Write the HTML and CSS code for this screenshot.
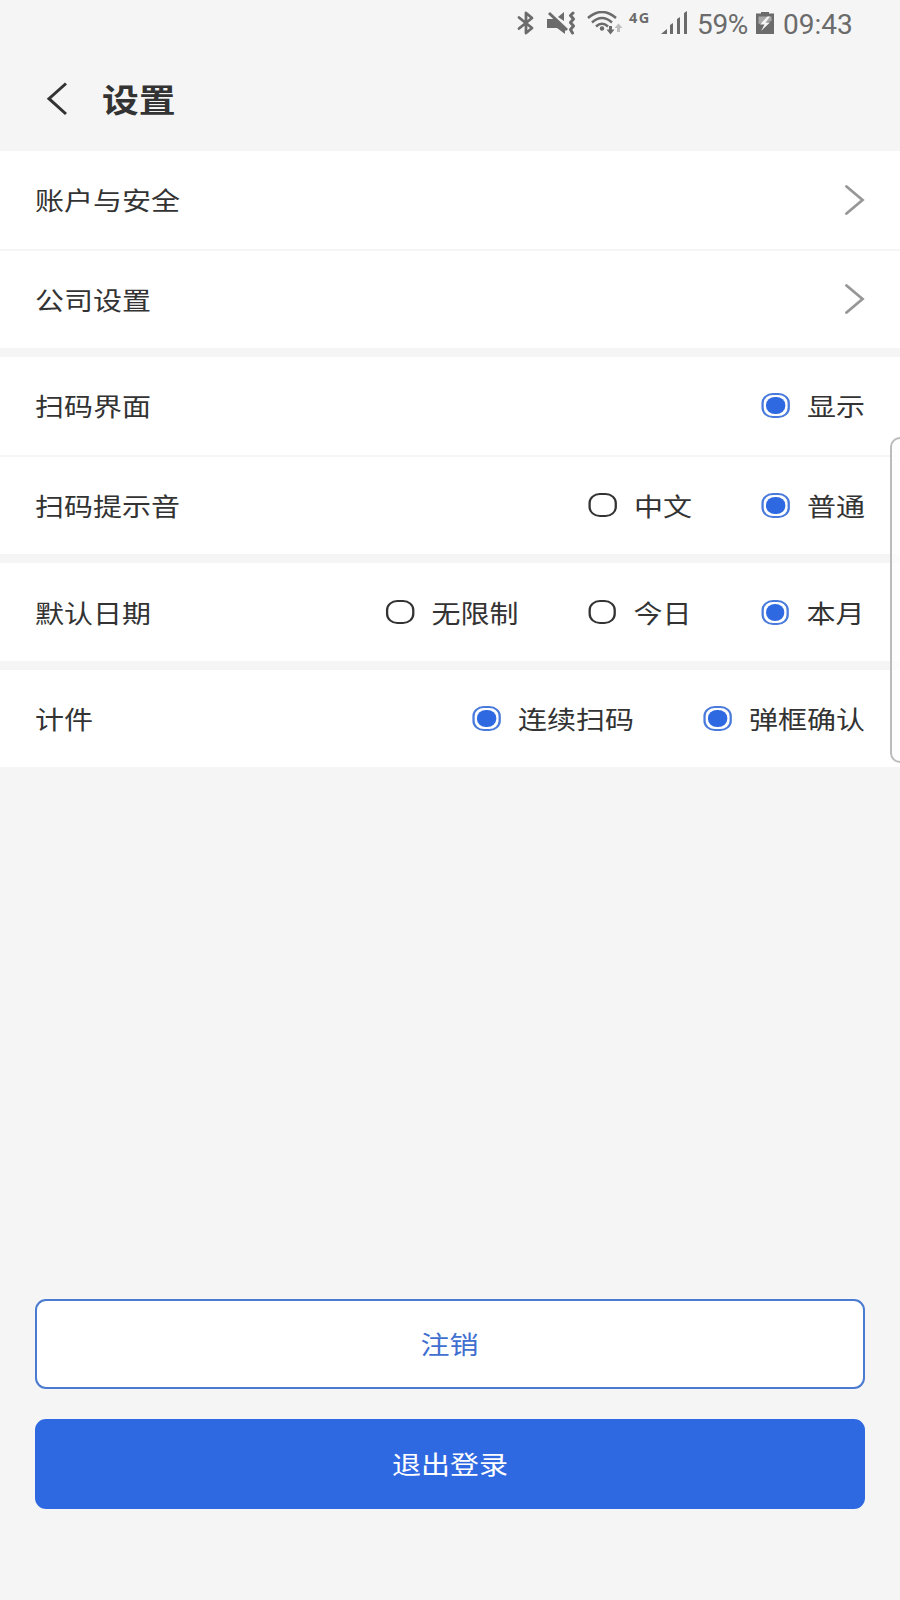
FILE: index.html
```html
<!DOCTYPE html>
<html lang="zh-CN">
<head>
    <meta charset="UTF-8">
    <meta name="viewport" content="width=device-width, initial-scale=1.0">
    <title>设置</title>
    <link rel="stylesheet" href="styles.css">
</head>
<body>
    <div class="status">
        <svg class="bluetooth" width="18" height="24" viewBox="0 0 18 24">
            <path d="M2 6.500 15 17 9 22V2L15 7 2 17.500" fill="none" stroke="#6b6b6b" stroke-width="2.800" stroke-linejoin="round" stroke-linecap="round"/>
        </svg>
        <svg class="mute" width="30" height="24" viewBox="0 0 30 24">
            <path d="M0 8h7l11 9v6l-8-6H0zM11 6l6-5v9z" fill="#6b6b6b"/>
            <path d="M2 2 20 19" stroke="#6b6b6b" stroke-width="3"/>
            <path d="M26 2 23.500 4.500 26.500 8 23.500 11.500 26.500 15 23.500 18.500 25.500 22" fill="none" stroke="#6b6b6b" stroke-width="3" stroke-linejoin="round" stroke-linecap="round"/>
        </svg>
        <svg class="wifi" width="36" height="24" viewBox="0 0 36 24">
            <g fill="none" stroke="#6b6b6b" stroke-width="2.500">
                <path d="M1 7Q15-5 29 7"/>
                <path d="M5 11.500Q15 2.500 25 11.500"/>
                <path d="M9 15.500Q15 10 21 15.500"/>
            </g>
            <circle cx="15" cy="17.500" r="2.200" fill="#6b6b6b"/>
            <path d="M22 15h3v3.500h2.500l-4 5-4-5H22z" fill="#6b6b6b"/>
            <path d="M30 21v-4h-2.500l4-4.500 4 4.500H33v4z" fill="#bdbdbd"/>
        </svg>
        <span class="net">4G</span>
        <svg class="signal" width="28" height="24" viewBox="0 0 28 24">
            <path d="M0 23 6 18v5zM9 14l3-2v11H9zM16 8l3-2v17h-3zM23 2l3-2v23h-3z" fill="#6b6b6b"/>
        </svg>
        <span class="percent">59%</span>
        <svg class="battery" width="18" height="24" viewBox="0 0 18 24">
            <path d="M0 2.500h5V1h8v1.500h5V23H0z" fill="#6b6b6b"/>
            <path d="M2.500 5.500h13v4.500L2.500 13z" fill="#a9a9a9"/>
            <path d="M11.500 5.500 4 13.500h4.500L5 20l9-8.500H9.500l4.500-6z" fill="#f5f5f5"/>
        </svg>
        <span class="time">09:43</span>
    </div>

    <div class="header">
        <svg class="back" width="22" height="34" viewBox="0 0 22 34">
            <path d="M20 1.500 3 16.700 20 32" fill="none" stroke="#333" stroke-width="3"/>
        </svg>
        <h1 class="title">设置</h1>
    </div>

    <div class="list">
        <div class="group">
            <div class="row line">
                <span class="name">账户与安全</span>
                <svg class="arrow" width="21" height="30" viewBox="0 0 21 30">
                    <path d="M2.500 1.500 18.500 15 2.500 28.500" fill="none" stroke="#979797" stroke-width="2.800" stroke-linecap="round"/>
                </svg>
            </div>
            <div class="row">
                <span class="name">公司设置</span>
                <svg class="arrow" width="21" height="30" viewBox="0 0 21 30">
                    <path d="M2.500 1.500 18.500 15 2.500 28.500" fill="none" stroke="#979797" stroke-width="2.800" stroke-linecap="round"/>
                </svg>
            </div>
        </div>
        <div class="group">
            <div class="row line">
                <span class="name">扫码界面</span>
                <div class="options">
                    <div class="option"><i class="radio on"></i><span class="text">显示</span></div>
                </div>
            </div>
            <div class="row">
                <span class="name">扫码提示音</span>
                <div class="options">
                    <div class="option"><i class="radio"></i><span class="text">中文</span></div>
                    <div class="option"><i class="radio on"></i><span class="text">普通</span></div>
                </div>
            </div>
        </div>
        <div class="group">
            <div class="row">
                <span class="name">默认日期</span>
                <div class="options">
                    <div class="option"><i class="radio"></i><span class="text">无限制</span></div>
                    <div class="option"><i class="radio"></i><span class="text">今日</span></div>
                    <div class="option"><i class="radio on"></i><span class="text">本月</span></div>
                </div>
            </div>
        </div>
        <div class="group">
            <div class="row">
                <span class="name">计件</span>
                <div class="options">
                    <div class="option"><i class="radio on"></i><span class="text">连续扫码</span></div>
                    <div class="option"><i class="radio on"></i><span class="text">弹框确认</span></div>
                </div>
            </div>
        </div>
    </div>

    <div class="buttons">
        <button class="btn"><span>注销</span></button>
        <button class="btn blue"><span>退出登录</span></button>
    </div>

    <!-- edge panel handle -->
    <div class="edge"></div>
</body>
</html>
```
FILE: styles.css
```css
* {
    box-sizing: border-box;
}
body {
    margin: 0;
    height: 1600px;
    display: flex;
    flex-direction: column;
    position: relative;
    overflow: hidden;
    background-color: #f5f5f5;
    color: #333;
    font-family: "Noto Sans CJK SC", sans-serif;
    font-size: 25.5px;
}
svg {
    display: block;
    flex: none;
}
.status {
    height: 48px;
    padding: 11px 0 0 517px;
    display: flex;
    color: #6b6b6b;
    font-family: Roboto, sans-serif;
    font-size: 28px;
    line-height: 28px;
    white-space: nowrap;
}
.mute {
    margin-left: 12px;
}
.wifi {
    margin-left: 10px;
}
.net {
    width: 22px;
    margin-left: 6px;
    font-family: "Open Sans", sans-serif;
    font-size: 14.5px;
    font-weight: bold;
    line-height: 14px;
    letter-spacing: 1.5px;
}
.signal {
    margin-left: 10px;
}
.percent {
    width: 51px;
    margin-left: 8px;
    letter-spacing: -0.3px;
}
.battery {
    margin-left: 8px;
}
.time {
    margin-left: 9px;
}
.header {
    height: 103px;
    padding: 0 0 1px 46px;
    display: flex;
    align-items: center;
}
.title {
    margin: 0 0 0 34px;
    padding-bottom: 3px;
    font-size: 32px;
    font-weight: bold;
    line-height: 40px;
    transform: scaleX(1.15);
    transform-origin: left;
}
.list {
    display: flex;
    flex-direction: column;
    gap: 9.4px;
}
.group {
    background-color: #fff;
}
.row {
    height: 97.3px;
    padding: 0 35px;
    display: flex;
    align-items: center;
    justify-content: space-between;
}
.line {
    height: 99.5px;
    border-bottom: 2px solid #f5f5f5;
}
.name {
    padding-bottom: 2px;
    transform: scaleX(1.138);
    transform-origin: left;
}
.options {
    display: flex;
    gap: 61px;
    transform: scaleX(1.138);
    transform-origin: right;
}
.option {
    display: flex;
    align-items: center;
    gap: 15.5px;
}
.text {
    padding-bottom: 2px;
}
.radio {
    width: 24.5px;
    height: 24px;
    border: 2px solid #333;
    border-radius: 10px;
}
.on {
    display: flex;
    height: 25px;
    padding: 2px;
    border-color: #4a7bdc;
}
.on::before {
    content: "";
    flex: 1;
    border-radius: 8px;
    background-color: #2f69e2;
}
.buttons {
    margin-top: auto;
    padding: 0 35px 91px;
    display: flex;
    flex-direction: column;
    gap: 30px;
}
.btn {
    height: 90px;
    border: 2px solid #4a7bd0;
    border-radius: 11px;
    background-color: #fff;
    color: #3f6fd0;
    font-family: inherit;
    font-size: 25.5px;
}
.btn span {
    display: inline-block;
    padding-bottom: 3px;
    transform: scaleX(1.138);
}
.blue {
    border-color: #2f69e2;
    background-color: #2f69e2;
    color: #fff;
}
.edge {
    position: absolute;
    top: 437px;
    right: -10px;
    width: 20px;
    height: 326px;
    border: 2px solid #bbb;
    border-radius: 13px;
    background-color: rgba(252, 252, 252, 0.8);
}
```
